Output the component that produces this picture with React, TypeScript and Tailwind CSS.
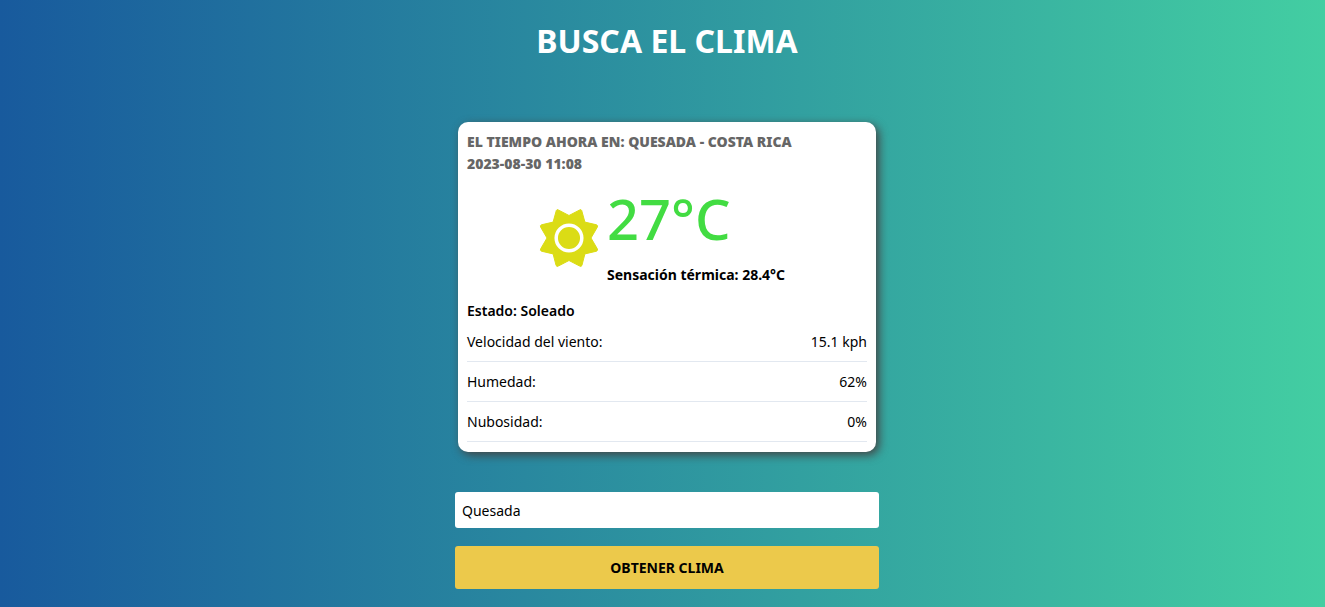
import { useState } from "react";

const measures = [
  { label: "Velocidad del viento:", value: "15.1 kph" },
  { label: "Humedad:", value: "62%" },
  { label: "Nubosidad:", value: "0%" },
];

function SunIcon() {
  return (
    <svg viewBox="-30 -30 60 60" className="size-15 shrink-0" aria-hidden="true">
      <path
        d="M0-22.5 10.6-28Q12-29 12.7-27.5L15.9-15.9 27.5-13.2Q29.3-12.4 28.3-10.8L22 0 28.3 10.8Q29.3 12.4 27.5 13.2L15.9 15.9 12.9 27.5Q12.2 29 10.6 28L0 22.5-10.6 28Q-12.2 29-12.9 27.5L-15.9 15.9-27.5 13.2Q-29.3 12.4-28.3 10.8L-22 0-28.3-10.8Q-29.3-12.4-27.5-13.2L-15.9-15.9-12.7-27.5Q-12-29-10.6-28Z"
        fill="#dbdc15"
        stroke="#dbdc15"
        strokeWidth="1"
        strokeLinejoin="round"
      />
      <circle r="12.8" fill="none" stroke="#fff" strokeWidth="3.5" />
    </svg>
  );
}

export default function App() {
  const [city, setCity] = useState("Quesada");

  return (
    <main className="flex min-h-screen flex-col items-center bg-linear-to-r/srgb from-[#185a9d] to-[#43cea2] pt-5 pb-4 pl-[9px] font-['Noto_Sans','Open_Sans',sans-serif] text-sm text-black">
      <h1 className="text-[32px] leading-[42px] font-bold text-white">BUSCA EL CLIMA</h1>

      <section className="mt-[60px] w-[418px] max-w-full rounded-[10px] bg-white px-[9px] pt-[9px] pb-[10px] shadow-[3px_3px_10px_#444]">
        <h2 className="text-sm leading-[22px] font-black text-[#666]">
          EL TIEMPO AHORA EN: QUESADA - COSTA RICA
          <br />
          2023-08-30 11:08
        </h2>
        <div className="mt-2 flex items-center justify-center gap-2 pr-[10px]">
          <div className="pt-2">
            <SunIcon />
          </div>
          <div>
            <p className="text-[56px] leading-[70px] font-medium text-[#42dc42]">27°C</p>
            <p className="mt-3 leading-5 font-bold">Sensación térmica: 28.4°C</p>
          </div>
        </div>
        <p className="mt-4 leading-5 font-semibold">Estado: Soleado</p>
        <dl className="pt-px">
          {measures.map(({ label, value }) => (
            <div key={label} className="flex h-10 items-center justify-between border-b border-[#e2e8f0]">
              <dt>{label}</dt>
              <dd>{value}</dd>
            </div>
          ))}
        </dl>
      </section>

      <form className="mt-10 flex w-[424px] max-w-full flex-col gap-[18px]" onSubmit={(event) => event.preventDefault()}>
        <input
          type="text"
          aria-label="Ciudad"
          value={city}
          onChange={(event) => setCity(event.target.value)}
          className="h-9 rounded-[3px] bg-white px-[7px] outline-none"
        />
        <button type="submit" className="h-[43px] rounded-[3px] bg-[#ecc94b] font-bold">
          OBTENER CLIMA
        </button>
      </form>
    </main>
  );
}
